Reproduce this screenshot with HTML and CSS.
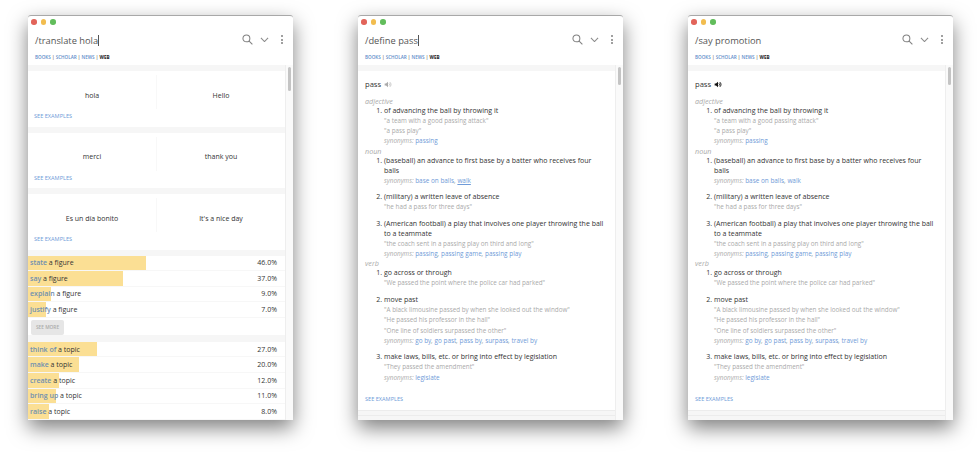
FILE: index.html
```html
<!DOCTYPE html>
<html lang="en">
<head>
    <meta charset="UTF-8">
    <title>Command bar</title>
    <link rel="stylesheet" href="styles.css">
</head>
<body>
    <div class="window">
        <div class="titlebar"><span class="dot red"></span><span class="dot yellow"></span><span class="dot green"></span></div>
        <div class="searchbar">
            <div class="query">/translate hola<span class="caret"></span></div>
            <svg class="icon-search" viewBox="0 0 14 14"><circle cx="5.6" cy="5.6" r="4.4"/><path d="M8.8 8.8 L13.2 13.2"/></svg>
            <svg class="icon-chevron" viewBox="0 0 10 6"><path d="M1 1 L5 5 L9 1"/></svg>
            <div class="icon-more"><i></i><i></i><i></i></div>
        </div>
        <div class="sources"><a>BOOKS</a> | <a>SCHOLAR</a> | <a>NEWS</a> | <b>WEB</b></div>
        <div class="results">
            <div class="scroll"><div class="thumb thumb-long"></div></div>
            <div class="content">
                <div class="card">
                    <div class="pair"><div>hola</div><div>Hello</div></div>
                    <a class="see-examples">SEE EXAMPLES</a>
                </div>
                <div class="card">
                    <div class="pair"><div>merci</div><div>thank you</div></div>
                    <a class="see-examples">SEE EXAMPLES</a>
                </div>
                <div class="card">
                    <div class="pair"><div>Es un día bonito</div><div>It's a nice day</div></div>
                    <a class="see-examples">SEE EXAMPLES</a>
                </div>
                <div class="card-rows">
                    <div class="row"><span class="bar" style="width: 46%"></span><span class="phrase"><a>state</a> a figure</span><span>46.0%</span></div>
                    <div class="row"><span class="bar" style="width: 37%"></span><span class="phrase"><a>say</a> a figure</span><span>37.0%</span></div>
                    <div class="row"><span class="bar" style="width: 9%"></span><span class="phrase"><a>explain</a> a figure</span><span>9.0%</span></div>
                    <div class="row"><span class="bar" style="width: 7%"></span><span class="phrase"><a>justify</a> a figure</span><span>7.0%</span></div>
                    <button class="see-more">SEE MORE</button>
                </div>
                <div class="card-rows">
                    <div class="row"><span class="bar" style="width: 27%"></span><span class="phrase"><a>think of</a> a topic</span><span>27.0%</span></div>
                    <div class="row"><span class="bar" style="width: 20%"></span><span class="phrase"><a>make</a> a topic</span><span>20.0%</span></div>
                    <div class="row"><span class="bar" style="width: 12%"></span><span class="phrase"><a>create</a> a topic</span><span>12.0%</span></div>
                    <div class="row"><span class="bar" style="width: 11%"></span><span class="phrase"><a>bring up</a> a topic</span><span>11.0%</span></div>
                    <div class="row"><span class="bar" style="width: 8%"></span><span class="phrase"><a>raise</a> a topic</span><span>8.0%</span></div>
                </div>
            </div>
        </div>
    </div>

    <div class="window">
        <div class="titlebar"><span class="dot red"></span><span class="dot yellow"></span><span class="dot green"></span></div>
        <div class="searchbar">
            <div class="query">/define pass<span class="caret"></span></div>
            <svg class="icon-search" viewBox="0 0 14 14"><circle cx="5.6" cy="5.6" r="4.4"/><path d="M8.8 8.8 L13.2 13.2"/></svg>
            <svg class="icon-chevron" viewBox="0 0 10 6"><path d="M1 1 L5 5 L9 1"/></svg>
            <div class="icon-more"><i></i><i></i><i></i></div>
        </div>
        <div class="sources"><a>BOOKS</a> | <a>SCHOLAR</a> | <a>NEWS</a> | <b>WEB</b></div>
        <div class="results">
            <div class="scroll"><div class="thumb"></div></div>
            <div class="content">
                <div class="definition">
                    <div class="word">pass
                        <svg class="speaker speaker-idle" viewBox="0 0 12 10"><path d="M1 3.5 H3 L6 1 V9 L3 6.5 H1 Z"/><path class="wave" d="M7.5 3.3 A2.4 2.4 0 0 1 7.5 6.7 M8.8 1.5 A4.6 4.6 0 0 1 8.8 8.5"/></svg>
                    </div>
                    <div class="pos">adjective</div>
                    <ol>
                        <li>of advancing the ball by throwing it
                            <p class="ex">"a team with a good passing attack"</p>
                            <p class="ex">"a pass play"</p>
                            <p class="syn">synonyms: <a>passing</a></p>
                        </li>
                    </ol>
                    <div class="pos">noun</div>
                    <ol>
                        <li>(baseball) an advance to first base by a batter who receives four balls
                            <p class="syn">synonyms: <a>base on balls</a>, <a class="hover">walk</a></p>
                        </li>
                        <li>(military) a written leave of absence
                            <p class="ex">"he had a pass for three days"</p>
                        </li>
                        <li>(American football) a play that involves one player throwing the ball to a teammate
                            <p class="ex">"the coach sent in a passing play on third and long"</p>
                            <p class="syn">synonyms: <a>passing</a>, <a>passing game</a>, <a>passing play</a></p>
                        </li>
                    </ol>
                    <div class="pos">verb</div>
                    <ol>
                        <li>go across or through
                            <p class="ex">"We passed the point where the police car had parked"</p>
                        </li>
                        <li>move past
                            <p class="ex">"A black limousine passed by when she looked out the window"</p>
                            <p class="ex">"He passed his professor in the hall"</p>
                            <p class="ex">"One line of soldiers surpassed the other"</p>
                            <p class="syn">synonyms: <a>go by</a>, <a>go past</a>, <a>pass by</a>, <a>surpass</a>, <a>travel by</a></p>
                        </li>
                        <li>make laws, bills, etc. or bring into effect by legislation
                            <p class="ex">"They passed the amendment"</p>
                            <p class="syn">synonyms: <a>legislate</a></p>
                        </li>
                    </ol>
                    <a class="see-examples">SEE EXAMPLES</a>
                </div>
                <div class="band"></div>
            </div>
        </div>
    </div>

    <div class="window">
        <div class="titlebar"><span class="dot red"></span><span class="dot yellow"></span><span class="dot green"></span></div>
        <div class="searchbar">
            <div class="query">/say promotion</div>
            <svg class="icon-search" viewBox="0 0 14 14"><circle cx="5.6" cy="5.6" r="4.4"/><path d="M8.8 8.8 L13.2 13.2"/></svg>
            <svg class="icon-chevron" viewBox="0 0 10 6"><path d="M1 1 L5 5 L9 1"/></svg>
            <div class="icon-more"><i></i><i></i><i></i></div>
        </div>
        <div class="sources"><a>BOOKS</a> | <a>SCHOLAR</a> | <a>NEWS</a> | <b>WEB</b></div>
        <div class="results">
            <div class="scroll"><div class="thumb"></div></div>
            <div class="content">
                <div class="definition">
                    <div class="word">pass
                        <svg class="speaker speaker-on" viewBox="0 0 12 10"><path d="M1 3.5 H3 L6 1 V9 L3 6.5 H1 Z"/><path class="wave" d="M7.5 3.3 A2.4 2.4 0 0 1 7.5 6.7 M8.8 1.5 A4.6 4.6 0 0 1 8.8 8.5"/></svg>
                    </div>
                    <div class="pos">adjective</div>
                    <ol>
                        <li>of advancing the ball by throwing it
                            <p class="ex">"a team with a good passing attack"</p>
                            <p class="ex">"a pass play"</p>
                            <p class="syn">synonyms: <a>passing</a></p>
                        </li>
                    </ol>
                    <div class="pos">noun</div>
                    <ol>
                        <li>(baseball) an advance to first base by a batter who receives four balls
                            <p class="syn">synonyms: <a>base on balls</a>, <a>walk</a></p>
                        </li>
                        <li>(military) a written leave of absence
                            <p class="ex">"he had a pass for three days"</p>
                        </li>
                        <li>(American football) a play that involves one player throwing the ball to a teammate
                            <p class="ex">"the coach sent in a passing play on third and long"</p>
                            <p class="syn">synonyms: <a>passing</a>, <a>passing game</a>, <a>passing play</a></p>
                        </li>
                    </ol>
                    <div class="pos">verb</div>
                    <ol>
                        <li>go across or through
                            <p class="ex">"We passed the point where the police car had parked"</p>
                        </li>
                        <li>move past
                            <p class="ex">"A black limousine passed by when she looked out the window"</p>
                            <p class="ex">"He passed his professor in the hall"</p>
                            <p class="ex">"One line of soldiers surpassed the other"</p>
                            <p class="syn">synonyms: <a>go by</a>, <a>go past</a>, <a>pass by</a>, <a>surpass</a>, <a>travel by</a></p>
                        </li>
                        <li>make laws, bills, etc. or bring into effect by legislation
                            <p class="ex">"They passed the amendment"</p>
                            <p class="syn">synonyms: <a>legislate</a></p>
                        </li>
                    </ol>
                    <a class="see-examples">SEE EXAMPLES</a>
                </div>
                <div class="band"></div>
            </div>
        </div>
    </div>
</body>
</html>
```

FILE: styles.css
```css
html, body {
    height: 100%;
}
body {
    margin: 0;
    padding: 15px 0 0 28px;
    box-sizing: border-box;
    display: flex;
    gap: 65px;
    overflow: hidden;
    background: #fff;
    font-family: "Open Sans", sans-serif;
    color: #333;
}
.window {
    width: 265px;
    height: 405px;
    flex: none;
    display: flex;
    flex-direction: column;
    background: #fff;
    border-radius: 3px 3px 0 0;
    border-top: 1px solid #a8a8a8;
    box-sizing: border-box;
    overflow: hidden;
    box-shadow: 0 8px 20px rgba(0,0,0,0.5);
}
.titlebar {
    height: 10px;
    padding-left: 3px;
    display: flex;
    align-items: center;
    gap: 4px;
    padding-top: 1px;
    box-sizing: content-box;
}
.dot {
    width: 5.5px;
    height: 5.5px;
    border-radius: 50%;
}
.dot.red { background: #e2645a; }
.dot.yellow { background: #f2bd4f; }
.dot.green { background: #62bd5c; }

.searchbar {
    height: 25px;
    padding: 0 10px 0 7px;
    display: flex;
    align-items: center;
}
.query {
    flex: 1;
    padding-top: 1px;
    font-size: 9.3px;
    color: #555;
    display: flex;
    align-items: center;
}
.caret {
    width: 1px;
    height: 11px;
    background: #555;
}
.icon-search {
    width: 11px;
    height: 11px;
    margin-right: 7px;
    fill: none;
    stroke: #808080;
    stroke-width: 1.3;
}
.icon-chevron {
    width: 9px;
    height: 5.5px;
    margin-right: 12px;
    fill: none;
    stroke: #8c8c8c;
    stroke-width: 1.2;
}
.icon-more {
    display: flex;
    flex-direction: column;
    gap: 1.5px;
}
.icon-more i {
    width: 2px;
    height: 2px;
    border-radius: 50%;
    background: #808080;
}
.sources {
    height: 13px;
    padding: 0 7px;
    font-size: 4.6px;
    font-weight: 600;
    color: #666;
    line-height: 10px;
}
.sources a { color: #5b8bc9; }
.sources b { color: #222; font-weight: 700; }

.results {
    flex: 1;
    min-height: 0;
    display: flex;
    flex-direction: row-reverse;
    background: #f6f6f6;
}
.scroll {
    width: 8px;
    flex: none;
    background: #fafafa;
    border-left: 1px solid #eee;
    box-sizing: border-box;
    padding: 2px 2px 0 2px;
}
.thumb {
    height: 18px;
    background: #c4c4c4;
    border-radius: 2px;
}
.thumb-long { height: 24px; }
.content {
    flex: 1;
    min-width: 0;
    overflow: hidden;
    padding-top: 6px;
}

.card {
    height: 55.5px;
    margin-bottom: 6px;
    background: #fff;
    display: flex;
    flex-direction: column;
}
.pair {
    height: 38px;
    padding-top: 4px;
    box-sizing: border-box;
    display: flex;
    align-items: stretch;
    font-size: 7px;
}
.pair div {
    flex: 1;
    display: flex;
    align-items: center;
    justify-content: center;
    padding-top: 6px;
}
.pair div + div {
    border-left: 1px solid #f8f8f8;
}
.see-examples {
    display: block;
    padding-left: 6px;
    font-size: 5.6px;
    line-height: 12px;
    color: #6f9bd8;
}
.card .see-examples {
    margin-top: 1px;
}
.card-rows {
    background: #fff;
    margin-bottom: 7px;
}
.card + .card-rows {
    margin-top: 0.5px;
}
.row {
    position: relative;
    height: 15.6px;
    padding: 0 8px 0 2px;
    display: flex;
    align-items: center;
    justify-content: space-between;
    font-size: 7px;
    border-bottom: 1px solid #f7f7f7;
    box-sizing: border-box;
}
.bar {
    position: absolute;
    left: 0;
    top: 0;
    bottom: 0;
    background: #fbdf94;
}
.row span:not(.bar) {
    position: relative;
}
.phrase a {
    color: #6f8fb0;
    font-weight: 600;
}
.see-more {
    display: block;
    margin: 2px 0 2.5px 3px;
    width: 33px;
    height: 15px;
    padding: 0;
    border: none;
    border-radius: 2px;
    background: #e6e6e6;
    color: #aaa;
    font-family: inherit;
    font-size: 4.8px;
    font-weight: 600;
}

.definition {
    height: 339px;
    background: #fff;
    padding: 6px 9px 0 7px;
    box-sizing: border-box;
    font-size: 7px;
    line-height: 10px;
}
.definition .see-examples {
    padding-left: 0;
    margin-top: 10px;
}
.word {
    font-size: 7.6px;
    line-height: 14px;
    height: 20px;
    display: flex;
    align-items: flex-start;
    gap: 3px;
}
.speaker {
    width: 8px;
    height: 7px;
    margin-top: 3.5px;
}
.speaker-idle path { fill: #aaa; }
.speaker-on path { fill: #111; }
.speaker .wave {
    fill: none;
    stroke-width: 1;
}
.speaker-idle .wave { stroke: #aaa; }
.speaker-on .wave { stroke: #111; stroke-width: 1.5; }
.pos {
    font-style: italic;
    color: #aaa;
    line-height: 9px;
    font-size: 7.2px;
}
ol {
    margin: 0;
    padding-left: 19px;
}
li {
    margin-bottom: 6.5px;
}
li:last-child {
    margin-bottom: 0;
}
.ex, .syn {
    margin: 0;
    line-height: 10.2px;
    color: #aaa;
}
.ex {
    font-size: 6.3px;
}
.syn {
    font-size: 6.4px;
    font-style: italic;
}
.syn a {
    font-style: normal;
    color: #6f9bd8;
}
.syn a.hover {
    text-decoration: underline;
}
.band {
    height: 6px;
    border-top: 1px solid #ececec;
    border-bottom: 1px solid #ececec;
    box-sizing: border-box;
}
```
